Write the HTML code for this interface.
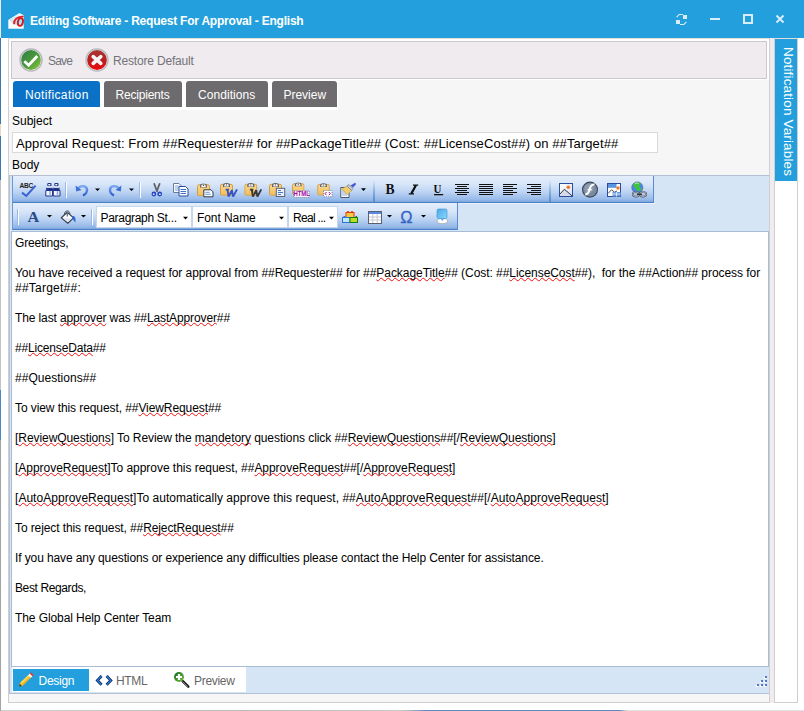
<!DOCTYPE html>
<html><head><meta charset="utf-8">
<style>
*{box-sizing:border-box;margin:0;padding:0}
html,body{width:804px;height:711px;overflow:hidden;background:#fff}
body{position:relative;font-family:"Liberation Sans",sans-serif;font-size:12px;color:#000}
.a{position:absolute}
.t{position:absolute;white-space:pre;line-height:1}
.ln{position:absolute;left:0;white-space:pre;line-height:15px;font-size:12px;color:#000}
.ln u{text-decoration:underline wavy #f01010;text-decoration-thickness:1px;text-underline-offset:0px;text-decoration-skip-ink:none}
.tb{position:absolute;background:linear-gradient(#e4eefb 0%,#d9e6f9 30%,#bcd3f3 62%,#98bae9 90%,#7ea6dd 100%);border-bottom:1px solid #4a80c4}
.gs{position:absolute;width:2px;background:linear-gradient(rgba(90,144,200,0),#5a90c8)}
</style></head><body>
<!-- left desktop edge -->
<div class="a" style="left:0;top:0;width:1px;height:38px;background:#f3e6ee"></div>
<div class="a" style="left:0;top:38px;width:1px;height:673px;background:linear-gradient(#3a78b0 0,#3a78b0 86px,#e8d8c8 86px,#e8d8c8 98px,#3a78b0 98px,#3a78b0 142px,#c4c4c4 142px,#c4c4c4 352px,#4a88c0 352px,#4a88c0 402px,#a4a4a4 402px)"></div>
<div class="a" style="left:1px;top:710px;width:803px;height:1px;background:linear-gradient(90deg,#d0d0d0 0,#b8b8b8 30%,#c8c8c8 50%,#5a8ac0 53%,#5a8ac0 77%,#e0e0e0 78%)"></div>

<!-- title bar -->
<div class="a" style="left:1px;top:0;width:803px;height:38px;background:#229fdc"></div>
<div class="t" style="left:30px;top:15px;font-weight:bold;font-size:12px;color:#fff;letter-spacing:-0.22px">Editing Software - Request For Approval - English</div>
<svg class="a" style="left:0;top:0" width="30" height="38" viewBox="0 0 30 38">
 <defs><linearGradient id="flap" x1="0" y1="0" x2="0" y2="1"><stop offset="0" stop-color="#f4fbff"/><stop offset="1" stop-color="#b4dcf2"/></linearGradient></defs>
 <path d="M8.3 20L19.3 13.2L23.7 15.3V28.7H8.3Z" fill="#fdfdfd"/>
 <path d="M8.3 20L19.3 13.2L23.7 15.3V23.5L16 25Z" fill="url(#flap)"/>
 <path d="M14 24.2C14 19.5 17.3 16.6 23.7 16.4" stroke="#e42428" stroke-width="1.9" fill="none"/>
 <ellipse cx="20.4" cy="22" rx="2.5" ry="3.9" transform="rotate(12 20.4 22)" stroke="#d41a1e" stroke-width="1.9" fill="#aee0f6"/>
</svg>

<!-- window controls -->
<svg class="a" style="left:660px;top:0" width="144" height="38" viewBox="660 0 144 38">
 <g fill="#d8edf9">
  <rect x="710" y="18" width="10" height="2"/>
  <path d="M743 14h10v10h-10z M745 16v6h6v-6z" fill-rule="evenodd"/>
 </g>
 <g stroke="#d8edf9" stroke-width="2" fill="none">
  <path d="M776.5 15.5l7 7M783.5 15.5l-7 7"/>
 </g>
 <g fill="#d8edf9">
  <path d="M676 17l3-3h4v1h-3.5l-2.5 2.5z"/>
  <rect x="683" y="15" width="4" height="4"/>
  <rect x="676" y="20" width="4" height="4"/>
  <path d="M687 22l-3 3h-4v-1h3.5l2.5-2.5z"/>
 </g>
</svg>

<!-- main panel frame -->
<div class="a" style="left:8px;top:38px;width:1px;height:665px;background:#cfcfcf"></div>
<div class="a" style="left:8px;top:38px;width:790px;height:1px;background:#e4dcd8"></div>
<div class="a" style="left:9px;top:80px;width:760px;height:622px;background:#f6f6f6"></div>
<div class="a" style="left:8px;top:702px;width:763px;height:1px;background:#cfcfcf"></div>
<div class="a" style="left:769px;top:38px;width:1px;height:665px;background:#cfcfcf"></div>
<div class="a" style="left:770px;top:38px;width:4px;height:665px;background:#efebef"></div>
<div class="a" style="left:774px;top:38px;width:1px;height:665px;background:#cfcfcf"></div>
<div class="a" style="left:797px;top:38px;width:1px;height:665px;background:#cfcfcf"></div>
<div class="a" style="left:774px;top:702px;width:24px;height:1px;background:#cfcfcf"></div>
<!-- right tab -->
<div class="a" style="left:775px;top:39px;width:22px;height:142px;background:#229fdc"></div>
<div class="t" style="left:777.5px;top:47px;width:21px;height:135px;color:#fff;font-size:13.5px;writing-mode:vertical-rl;line-height:21px;letter-spacing:0.15px">Notification Variables</div>

<!-- toolbar -->
<div class="a" style="left:11px;top:41px;width:756px;height:38px;background:#efebef;border:1px solid #c9c9c9"></div>
<svg class="a" style="left:0;top:40px" width="120" height="40" viewBox="0 40 120 40">
 <defs>
  <linearGradient id="gG" x1="0" y1="0" x2="1" y2="1"><stop offset="0" stop-color="#2f7f46"/><stop offset="0.55" stop-color="#4c9a3c"/><stop offset="1" stop-color="#93cc3c"/></linearGradient>
  <linearGradient id="gR" x1="0" y1="0" x2="0" y2="1"><stop offset="0" stop-color="#a83636"/><stop offset="0.5" stop-color="#b82020"/><stop offset="1" stop-color="#f00808"/></linearGradient>
 </defs>
 <circle cx="31" cy="60" r="11" fill="#fafafa" stroke="#b6b6bc" stroke-width="1.4"/>
 <circle cx="31" cy="60" r="9.9" fill="url(#gG)"/>
 <path d="M24.3 61.3L28.6 65.2L37.3 56" stroke="#fff" stroke-width="2.8" fill="none" stroke-linejoin="miter"/>
 <circle cx="97" cy="60" r="11" fill="#fafafa" stroke="#b6bcc0" stroke-width="1.4"/>
 <circle cx="97" cy="60" r="9.9" fill="url(#gR)"/>
 <path d="M93.2 56.6L100.8 63.4M100.8 56.6L93.2 63.4" stroke="#f4f4f4" stroke-width="3.6" stroke-linecap="round"/>
</svg>
<div class="t" style="left:48px;top:55px;color:#737378;letter-spacing:-0.8px">Save</div>
<div class="t" style="left:113px;top:55px;color:#737378;letter-spacing:-0.18px">Restore Default</div>

<!-- tabs -->
<div class="a" style="left:9px;top:79px;width:760px;height:1px;background:#fff"></div>
<div class="a" style="left:9px;top:80px;width:329px;height:30px;background:#fff"></div>
<div class="a" style="left:13px;top:81px;width:87px;height:26px;background:#0a71c6;border-radius:3px 3px 0 0"></div>
<div class="a" style="left:104px;top:81px;width:78px;height:26px;background:#6e6b6e;border-radius:3px 3px 0 0"></div>
<div class="a" style="left:186px;top:81px;width:82px;height:26px;background:#6e6b6e;border-radius:3px 3px 0 0"></div>
<div class="a" style="left:272px;top:81px;width:65px;height:26px;background:#6e6b6e;border-radius:3px 3px 0 0"></div>
<div class="t" style="left:25px;top:89px;color:#fff;letter-spacing:0.36px">Notification</div>
<div class="t" style="left:115.5px;top:89px;color:#fff;letter-spacing:-0.2px">Recipients</div>
<div class="t" style="left:198px;top:89px;color:#fff;letter-spacing:0.06px">Conditions</div>
<div class="t" style="left:283.5px;top:89px;color:#fff;letter-spacing:-0.02px">Preview</div>

<!-- subject -->
<div class="t" style="left:12px;top:115px">Subject</div>
<div class="a" style="left:12px;top:132px;width:646px;height:21px;background:#fff;border:1px solid #d9d9d9"></div>
<div class="t" style="left:16px;top:137px;font-size:13px;letter-spacing:0.1px">Approval Request: From ##Requester## for ##PackageTitle## (Cost: ##LicenseCost##) on ##Target##</div>
<div class="t" style="left:12px;top:159px">Body</div>

<!-- editor -->
<div class="a" style="left:9px;top:175px;width:760px;height:519px;background:#d6e5f5;border-top:1px solid #b4c0d4;border-left:1px solid #b4c0d4;border-bottom:1px solid #b4c0d4"></div>
<div class="tb" style="left:12px;top:176px;width:642px;height:27px;border-left:1px solid #6a98d8;border-right:1px solid #5a8ad0"></div>
<div class="a" style="left:12px;top:203px;width:643px;height:1px;background:#e8f1fb"></div>
<div class="gs" style="left:373px;top:180px;height:22px"></div>
<div class="gs" style="left:549px;top:180px;height:22px"></div>
<div class="tb" style="left:12px;top:203px;width:446px;height:27px;border-left:1px solid #6a98d8;border-right:1px solid #5a8ad0"></div>
<!-- dropdown boxes -->
<div class="a" style="left:96px;top:206px;width:96px;height:22px;background:#fff;border:1px solid #c5d7ef"></div>
<div class="a" style="left:192px;top:206px;width:96px;height:22px;background:#fff;border:1px solid #c5d7ef"></div>
<div class="a" style="left:288px;top:206px;width:50px;height:22px;background:#fff;border:1px solid #c5d7ef"></div>
<div class="t" style="left:100.5px;top:212px;letter-spacing:-0.3px">Paragraph St...</div>
<div class="t" style="left:197px;top:212px;letter-spacing:-0.07px">Font Name</div>
<div class="t" style="left:293px;top:212px;letter-spacing:-0.7px">Real ...</div>

<svg id="icons" class="a" style="left:0;top:170px" width="700" height="64" viewBox="0 170 700 64">
 <defs>
  <linearGradient id="blu" x1="0" y1="0" x2="0" y2="1"><stop offset="0" stop-color="#7aa6f0"/><stop offset="1" stop-color="#2c5cc8"/></linearGradient>
  <linearGradient id="clip" x1="0" y1="0" x2="0" y2="1"><stop offset="0" stop-color="#fbd98a"/><stop offset="1" stop-color="#f1bd5c"/></linearGradient>
  <linearGradient id="docg" x1="0" y1="0" x2="1" y2="1"><stop offset="0" stop-color="#ffffff"/><stop offset="1" stop-color="#d8e2f0"/></linearGradient>
  <linearGradient id="mon" x1="0" y1="0" x2="1" y2="1"><stop offset="0" stop-color="#4aa8e8"/><stop offset="1" stop-color="#8ad8fa"/></linearGradient>
  <symbol id="clipb" viewBox="0 0 13 13">
   <rect x="0.5" y="1.5" width="12" height="11" rx="1.6" fill="url(#clip)" stroke="#d49c44" stroke-width="1"/>
   <path d="M3 4.2V2.6C3 0.9 4.4 0.2 6.5 0.2S10 0.9 10 2.6V4.2Z" fill="#5a626c"/>
   <path d="M4.2 3.6V2.9C4.2 1.6 5.1 1.2 6.5 1.2S8.8 1.6 8.8 2.9V3.6Z" fill="#f6f6f6"/>
   <circle cx="6.5" cy="2.1" r="0.65" fill="#7a4a1a"/>
  </symbol>
 </defs>
 <!-- separators row1 -->
 <g fill="#ffffff"><rect x="66" y="182" width="1" height="16"/><rect x="140" y="182" width="1" height="16"/><rect x="18" y="209" width="1" height="16"/><rect x="92" y="209" width="1" height="16"/></g>
 <g fill="#9ab8e0"><rect x="65" y="182" width="1" height="16"/><rect x="139" y="182" width="1" height="16"/><rect x="17" y="209" width="1" height="16"/><rect x="91" y="209" width="1" height="16"/></g>
 <!-- ABC check -->
 <text x="19.5" y="187.8" font-family="Liberation Sans" font-weight="bold" font-size="6.6" fill="#222" letter-spacing="-0.3">ABC</text>
 <path d="M22 192.6L26.3 196L35.6 185.6" stroke="#3a62d2" stroke-width="2" fill="none"/>
 <!-- binoculars -->
 <g fill="#22348a">
  <rect x="47.3" y="183" width="4.2" height="3.6" rx="1"/>
  <rect x="54.3" y="183" width="4.2" height="3.6" rx="1"/>
  <rect x="46.2" y="187.6" width="6.2" height="3" />
  <rect x="53.4" y="187.6" width="6.2" height="3" />
  <rect x="51.5" y="188.5" width="3" height="2.5"/>
 </g>
 <g fill="#fff"><rect x="48.3" y="184" width="2" height="1.4"/><rect x="55.3" y="184" width="2" height="1.4"/><rect x="46.8" y="186.4" width="5" height="1.2"/><rect x="54" y="186.4" width="5" height="1.2"/></g>
 <path d="M45.8 190.5H52.5V196H45.8Z M53.3 190.5H60V196H53.3Z" fill="#f4f6fc" stroke="#22348a" stroke-width="1"/>
 <path d="M50 191v4.5M57.5 191v4.5" stroke="#9aaade" stroke-width="1.6"/>
 <!-- undo/redo -->
 <path d="M78.5 188C80.5 185.5 86.5 185 87 189.5C87.3 192.5 85 194.5 83 195.5" stroke="url(#blu)" stroke-width="2.4" fill="none"/>
 <path d="M75.6 185.6L76.2 191.4L81.5 190Z" fill="#3d6fd8"/>
 <path d="M118.5 188C116.5 185.5 110.5 185 110 189.5C109.7 192.5 112 194.5 114 195.5" stroke="url(#blu)" stroke-width="2.4" fill="none"/>
 <path d="M121.4 185.6L120.8 191.4L115.5 190Z" fill="#3d6fd8"/>
 <g fill="#000"><path d="M95 188.5h5l-2.5 2.6z"/><path d="M129 188.5h5l-2.5 2.6z"/><path d="M361 188.3h5l-2.5 2.6z"/>
  <path d="M47 215h5l-2.5 2.6z"/><path d="M81 215h5l-2.5 2.6z"/><path d="M183 216.8h5l-2.5 2.6z"/><path d="M279 216.8h5l-2.5 2.6z"/><path d="M329 216.8h5l-2.5 2.6z"/><path d="M387 215h5l-2.5 2.6z"/><path d="M421 215h5l-2.5 2.6z"/></g>
 <!-- scissors -->
 <path d="M154 183.2L157.2 191.8M159.8 183.2L156.6 191.8" stroke="#5e6268" stroke-width="1.8"/>
 <circle cx="153.9" cy="194" r="2.4" fill="#2446c0"/><circle cx="159.7" cy="194" r="2.4" fill="#2446c0"/>
 <circle cx="153.7" cy="194.2" r="0.9" fill="#dde6ff"/><circle cx="159.9" cy="194.2" r="0.9" fill="#dde6ff"/>
 <!-- copy -->
 <path d="M173.5 183.5H179L181 185.5V192.5H173.5Z" fill="#fff" stroke="#6a7a9a" stroke-width="1"/>
 <path d="M174.8 186h4M174.8 188h4M174.8 190h4" stroke="#7aa0d8" stroke-width="1"/>
 <path d="M179 186.5H185.5L188 189V196H179Z" fill="#fff" stroke="#2a4a9a" stroke-width="1"/>
 <path d="M180.5 189.5h5.5M180.5 191.5h5.5M180.5 193.5h5.5" stroke="#3a70d0" stroke-width="1"/>
 <!-- paste 1 -->
 <use href="#clipb" x="197" y="183.3" width="13" height="13"/>
 <path d="M203.8 189.8H211L213 191.8V196.8H203.8Z" fill="#fff" stroke="#2c3a4e" stroke-width="1"/>
 <path d="M205.2 192.3h4.5M205.2 194.3h5.5" stroke="#6a98d8" stroke-width="1"/>
 <!-- paste W blue -->
 <use href="#clipb" x="220" y="182.8" width="13" height="13"/>
 <path d="M225.6 189.6h3.4M227.5 189.6L228.6 196.6L231.9 190.2L233.1 196.6L237 189.4" stroke="#3454c8" stroke-width="1.9" fill="none" stroke-linejoin="bevel"/>
 <!-- paste W gray -->
 <use href="#clipb" x="244.3" y="182.8" width="13" height="13"/>
 <path d="M249.9 189.6h3.4M251.8 189.6L252.9 196.6L256.2 190.2L257.4 196.6L261.3 189.4" stroke="#3a3a3e" stroke-width="1.9" fill="none" stroke-linejoin="bevel"/>
 <!-- paste text -->
 <use href="#clipb" x="269" y="182.8" width="13" height="13"/>
 <rect x="276.3" y="188.3" width="8.4" height="8.2" fill="#eef2fa" stroke="#5a6474" stroke-width="1"/>
 <path d="M278 190.5h3M278 192.5h5M278 194.5h3" stroke="#4a78c8" stroke-width="1"/>
 <!-- paste html -->
 <use href="#clipb" x="292" y="182.3" width="12.5" height="12.5"/>
 <rect x="293.5" y="190.5" width="15.5" height="6.8" fill="#fff" stroke="#606a80" stroke-width="0.8" stroke-dasharray="1 1"/>
 <text x="293.6" y="196.4" font-family="Liberation Sans" font-weight="bold" font-size="6.6" fill="#a000a0" letter-spacing="-0.1" transform="translate(293.6 0) scale(0.9 1) translate(-293.6 0)">HTML</text>
 <!-- paste code -->
 <use href="#clipb" x="317.2" y="183" width="12.6" height="12.6"/>
 <rect x="323.5" y="190.5" width="8.5" height="6.3" fill="#fff" stroke="#606a80" stroke-width="0.8" stroke-dasharray="1 1"/>
 <path d="M326.5 192l-1.5 1.6l1.5 1.6M328.8 192l1.5 1.6l-1.5 1.6" stroke="#a000a0" stroke-width="1" fill="none"/>
 <!-- brush -->
 <path d="M340.8 187.5H346.5L349 190V197.5H340.8Z" fill="#fff" stroke="#4a5670" stroke-width="1"/>
 <path d="M342 191h4M342 193h5M342 195h5" stroke="#8aa8d8" stroke-width="1"/>
 <path d="M341.8 189L347 186L351.5 190.5L347.5 194.5Z" fill="#f0cf6a" stroke="#b99638" stroke-width="0.6"/>
 <path d="M347 186L349 184.5L352.8 188.5L351.5 190.5Z" fill="#c8ccd4" stroke="#6a7080" stroke-width="0.6"/>
 <path d="M350.5 185.5L355 182.8L356.2 184L353 187.8Z" fill="#4a5ad0"/>
 <!-- B I U -->
 <text x="385.6" y="194.2" font-family="Liberation Serif" font-weight="bold" font-size="13.6" fill="#111">B</text>
 <path d="M413 185.2h5.2M408.8 193.8h5.2M416 185.2L411.2 193.8" stroke="#111" stroke-width="1.3" fill="none"/><path d="M415.8 185.4L411.4 193.6" stroke="#111" stroke-width="2.2"/>
 <text x="433.4" y="193" font-family="Liberation Serif" font-weight="bold" font-size="12.5" fill="#111" transform="translate(433.4 193) scale(0.88 1.05) translate(-433.4 -193)">U</text>
 <rect x="434" y="194" width="9.2" height="1.3" fill="#111"/>
 <!-- alignments -->
 <g fill="#111">
  <rect x="455" y="184" width="14" height="1"/><rect x="457" y="186" width="10" height="1"/><rect x="455" y="188" width="14" height="1"/><rect x="457" y="190" width="10" height="1"/><rect x="455" y="192" width="14" height="1"/><rect x="457" y="194" width="10" height="1"/>
  <rect x="479" y="184" width="14" height="1"/><rect x="479" y="186" width="14" height="1"/><rect x="479" y="188" width="14" height="1"/><rect x="479" y="190" width="14" height="1"/><rect x="479" y="192" width="14" height="1"/><rect x="479" y="194" width="14" height="1"/>
  <rect x="503" y="184" width="14" height="1"/><rect x="503" y="186" width="10" height="1"/><rect x="503" y="188" width="14" height="1"/><rect x="503" y="190" width="10" height="1"/><rect x="503" y="192" width="14" height="1"/><rect x="503" y="194" width="10" height="1"/>
  <rect x="527" y="184" width="14" height="1"/><rect x="531" y="186" width="10" height="1"/><rect x="527" y="188" width="14" height="1"/><rect x="531" y="190" width="10" height="1"/><rect x="527" y="192" width="14" height="1"/><rect x="531" y="194" width="10" height="1"/>
 </g>
 <!-- image -->
 <rect x="559.5" y="183.5" width="13" height="13" fill="url(#docg)" stroke="#2c4c9c" stroke-width="1"/>
 <path d="M560 194L564.3 189.3L567.5 191.8L572 195.8V196H560Z" fill="#d6d8ec"/>
 <path d="M560 194L564.3 189.3L568 192.3L572 195.8" stroke="#303848" stroke-width="1" fill="none"/>
 <circle cx="568.3" cy="187.3" r="1.8" fill="#f07828"/>
 <!-- flash -->
 <circle cx="590" cy="189.6" r="7.5" fill="#7a8aa0" stroke="#3e4858" stroke-width="1.1"/>
 <circle cx="589" cy="188.5" r="4.5" fill="#8e9cb0"/>
 <path d="M594.5 184.6C591 184.2 590.2 186.5 589.5 189.8C588.8 193 588 194.2 585.2 194.4" stroke="#fff" stroke-width="2" fill="none"/>
 <path d="M587.6 189.6h4.2" stroke="#fff" stroke-width="1.4"/>
 <!-- image map -->
 <rect x="607.5" y="183.5" width="13" height="13" fill="#fff" stroke="#2c4c9c" stroke-width="1"/>
 <rect x="608" y="184" width="8.5" height="3.8" fill="#5a96e0"/>
 <path d="M608 193.5L611.5 189.8L614.5 192.2L617 191" stroke="#303848" stroke-width="0.9" fill="none"/>
 <circle cx="618" cy="188" r="1.7" fill="#f07828"/>
 <rect x="612.5" y="192" width="8" height="4.5" fill="#6a9ae0"/>
 <path d="M616.5 192v4.5M612.5 194h8" stroke="#fff" stroke-width="0.7"/>
 <!-- link globe -->
 <circle cx="637.3" cy="187.5" r="5.6" fill="#4a86e8" stroke="#5a6a80" stroke-width="0.6"/>
 <path d="M633 185C634.5 182.2 638.5 181.8 640.8 183.6L639.2 186.5L641.8 189.5L638 191.2L635.2 188.2Z" fill="#3ec43a"/>
 <path d="M634.8 183.8C636 183 637.5 183 638.5 183.5" stroke="#c8f0c0" stroke-width="1" fill="none"/>
 <g fill="none"><ellipse cx="636" cy="194.3" rx="3.3" ry="2.3" stroke="#3c424c" stroke-width="1.6"/><ellipse cx="643" cy="194.3" rx="3.3" ry="2.3" stroke="#3c424c" stroke-width="1.6"/>
 <ellipse cx="636" cy="194.3" rx="3.3" ry="2.3" stroke="#f4f4f6" stroke-width="0.6"/><ellipse cx="643" cy="194.3" rx="3.3" ry="2.3" stroke="#f4f4f6" stroke-width="0.6"/><path d="M637 194.3h5" stroke="#2c3038" stroke-width="1.4"/></g>
 <!-- row2: A -->
 <text x="27.4" y="222" font-family="Liberation Serif" font-weight="bold" font-size="15" fill="#2c4a8a" transform="translate(27.4 222) scale(1.08 1) translate(-27.4 -222)">A</text>
 <!-- bucket -->
 <path d="M61.3 217.8L67.3 212.2L73.5 217.9L67.8 223.2Z" fill="#fbfcfe" stroke="#384252" stroke-width="1.2" stroke-linejoin="round"/>
 <path d="M62.8 218.2L72 218.2L67.8 222Z" fill="#dfe4ee"/>
 <path d="M64.3 214.8C64.5 212 66 210.8 67.3 210.9C68.8 211 69.8 212.2 70 213.8" stroke="#4a5262" stroke-width="1" fill="none"/>
 <path d="M67.3 211.5V216.5" stroke="#6a7282" stroke-width="1.3"/>
 <path d="M72.5 216C74.8 215.6 76.2 218.2 75.3 222.5C74.2 221.5 73.3 219.8 72.3 218.6Z" fill="#2a68d8"/>
 <!-- blocks -->
 <rect x="346" y="212.5" width="8" height="5" fill="#ffc840" stroke="#e03a10" stroke-width="1"/>
 <rect x="347.2" y="211" width="1.6" height="1.5" fill="#e03a10"/><rect x="351.2" y="211" width="1.6" height="1.5" fill="#e03a10"/>
 <rect x="342.5" y="217.5" width="7.5" height="5" fill="#bfe8fa" stroke="#2a74d0" stroke-width="1"/>
 <rect x="343.5" y="216" width="1.5" height="1.5" fill="#2a74d0"/>
 <rect x="350" y="217.5" width="7.5" height="5" fill="#b8e020" stroke="#1a7a1a" stroke-width="1"/>
 <rect x="355.5" y="216" width="1.5" height="1.5" fill="#1a7a1a"/>
 <!-- table -->
 <rect x="368.5" y="211.5" width="13" height="12" fill="#fff" stroke="#5a6070" stroke-width="1"/>
 <rect x="369" y="212" width="12" height="2" fill="#5a8ae0"/>
 <path d="M372.8 214v9M377.2 214v9M369 217h12M369 220h12" stroke="#b8bcc8" stroke-width="0.8"/>
 <!-- omega -->
 <text x="400.2" y="223" font-family="Liberation Sans" font-size="16.5" fill="#3464c0" stroke="#3464c0" stroke-width="0.3">&#937;</text>
 <!-- monitor -->
 <ellipse cx="442.4" cy="221" rx="5.4" ry="2.7" fill="#fff" stroke="#a0a8b0" stroke-width="0.8"/>
 <rect x="437" y="209" width="10" height="9.5" rx="1.5" fill="url(#mon)" stroke="#3a90d0" stroke-width="0.6"/>
 <path d="M440.5 218.5L442.4 221L444.2 218.5Z" fill="#5aa8e0"/>
</svg>

<div class="a" style="left:11px;top:231px;width:758px;height:436px;background:#fff;border:1px solid #a9bcd6"></div>

<div id="body" class="a" style="left:15px;top:236px;width:750px;height:420px">
<div class="ln" style="top:0;letter-spacing:-0.200px">Greetings,</div>
<div class="ln" style="top:30px;letter-spacing:-0.057px">You have received a request for approval from ##Requester## for ##<u>PackageTitle</u>## (Cost: ##<u>LicenseCost</u>##),&nbsp; for the ##Action## process for</div>
<div class="ln" style="top:45px;letter-spacing:0.233px">##Target##:</div>
<div class="ln" style="top:75px;letter-spacing:-0.119px">The last <u>approver</u> was ##<u>LastApprover</u>##</div>
<div class="ln" style="top:105px;letter-spacing:-0.174px">##<u>LicenseData</u>##</div>
<div class="ln" style="top:135px;letter-spacing:0.032px">##Questions##</div>
<div class="ln" style="top:165px;letter-spacing:-0.084px">To view this request, ##<u>ViewRequest</u>##</div>
<div class="ln" style="top:195px;letter-spacing:-0.066px">[<u>ReviewQuestions</u>] To Review the <u>mandetory</u> questions click ##<u>ReviewQuestions</u>##[/<u>ReviewQuestions</u>]</div>
<div class="ln" style="top:225px;letter-spacing:-0.034px">[<u>ApproveRequest</u>]To approve this request, ##<u>ApproveRequest</u>##[/<u>ApproveRequest</u>]</div>
<div class="ln" style="top:255px;letter-spacing:0.032px">[<u>AutoApproveRequest</u>]To automatically approve this request, ##<u>AutoApproveRequest</u>##[/<u>AutoApproveRequest</u>]</div>
<div class="ln" style="top:285px;letter-spacing:-0.100px">To reject this request, ##<u>RejectRequest</u>##</div>
<div class="ln" style="top:315px;letter-spacing:-0.105px">If you have any questions or experience any difficulties please contact the Help Center for assistance.</div>
<div class="ln" style="top:345px;letter-spacing:-0.388px">Best Regards,</div>
<div class="ln" style="top:375px;letter-spacing:-0.088px">The Global Help Center Team</div>
</div>

<!-- bottom bar -->
<div class="a" style="left:12px;top:667px;width:234px;height:25px;background:#fff"></div>
<div class="a" style="left:13px;top:669px;width:76px;height:22px;background:#229fdc"></div>
<div class="t" style="left:38.5px;top:675px;color:#fff;letter-spacing:-0.28px">Design</div>
<div class="t" style="left:116px;top:675px;color:#666;letter-spacing:-0.35px">HTML</div>
<div class="t" style="left:194px;top:675px;color:#666;letter-spacing:-0.3px">Preview</div>
<svg id="bicons" class="a" style="left:0;top:660px" width="804" height="40" viewBox="0 660 804 40">
 <defs>
  <linearGradient id="mg" x1="0" y1="0" x2="1" y2="1"><stop offset="0" stop-color="#0a6a1e"/><stop offset="1" stop-color="#7cc43a"/></linearGradient>
 </defs>
 <!-- pencil -->
 <path d="M19.2 686.5L20 683L30 673.5L32.5 676L23 685.6Z" fill="#f2b81e"/>
 <path d="M20.5 682.5L29.5 674L30.8 675.3L21.8 683.8Z" fill="#fbd860"/>
 <path d="M28.3 675.2L30 673.5L32.5 676L30.8 677.7Z" fill="#ffffff"/>
 <path d="M29.8 673.7L31 672.5L33.5 675L32.3 676.2Z" fill="#e83434"/>
 <path d="M19.2 686.5L19.8 684L21.7 685.9Z" fill="#302010"/>
 <!-- <> -->
 <path d="M101.6 676L97.4 680.4L101.6 684.8" stroke="#0a2458" stroke-width="2.8" fill="none"/>
 <path d="M101.6 676L97.4 680.4L101.6 684.8" stroke="#2a8ae8" stroke-width="1.1" fill="none"/>
 <path d="M106.6 676L110.8 680.4L106.6 684.8" stroke="#0a2458" stroke-width="2.8" fill="none"/>
 <path d="M106.6 676L110.8 680.4L106.6 684.8" stroke="#2a8ae8" stroke-width="1.1" fill="none"/>
 <!-- magnifier -->
 <path d="M182.8 681.2L188.3 686.6" stroke="#202020" stroke-width="2.6" stroke-linecap="round"/>
 <path d="M182.6 681.6L187.6 686.6" stroke="#9a9a9a" stroke-width="0.8"/>
 <circle cx="179" cy="677" r="5" fill="url(#mg)"/>
 <path d="M179 674v6M176 677h6" stroke="#fff" stroke-width="2.2"/>
 <!-- grip -->
 <g fill="#fff"><rect x="764" y="677" width="2" height="2"/><rect x="760" y="681" width="2" height="2"/><rect x="764" y="681" width="2" height="2"/><rect x="756" y="685" width="2" height="2"/><rect x="760" y="685" width="2" height="2"/><rect x="764" y="685" width="2" height="2"/></g>
 <g fill="#5878c6"><rect x="765" y="676" width="2" height="2"/><rect x="761" y="680" width="2" height="2"/><rect x="765" y="680" width="2" height="2"/><rect x="757" y="684" width="2" height="2"/><rect x="761" y="684" width="2" height="2"/><rect x="765" y="684" width="2" height="2"/></g>
</svg>

</body></html>
